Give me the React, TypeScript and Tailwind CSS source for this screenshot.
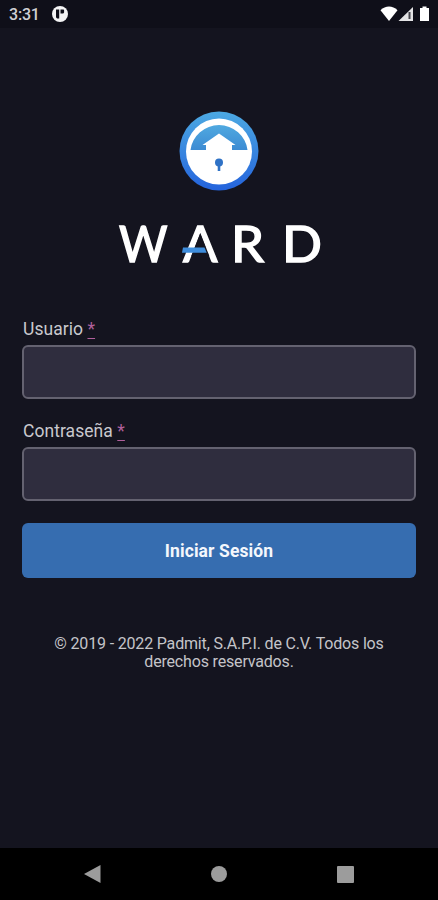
function StatusBar() {
  return (
    <header className="flex h-7 items-center justify-between bg-[#0f0f19] pl-[9px] pr-[7px]">
      <div className="flex items-center gap-3">
        <span className="pt-0.5 text-base leading-[26px] font-medium tracking-[-0.2px] text-[#cfcfd4]">3:31</span>
        <svg className="size-4" viewBox="0 0 16 16">
          <circle cx="8" cy="8" r="8" fill="#f4f4f5" />
          <path d="M4 3.500h3.200v9H6c-1.200 0-2-.6-2-2z" fill="#0f0f19" />
          <path d="M8.500 3.500h2.600c.6 0 1 .4 1 1V6c0 1-.8 1.600-1.800 1.600H8.500z" fill="#0f0f19" />
        </svg>
      </div>
      <svg className="h-4 w-[51px]" viewBox="0 0 51 16">
        <path d="M.5 4.200C5.500-.6 12.500-.6 17.500 4.200L9 15z" fill="#fff" />
        <path d="M33 1v14H18.500z" fill="#e4e4e6" />
        <path d="M28.500 6h2v7h-2z" fill="#45454c" />
        <path d="M42.500.5h4V2H49v13h-9V2h2.500z" fill="#fff" />
      </svg>
    </header>
  );
}

function Emblem() {
  return (
    <svg className="h-[80px] w-[80px]" viewBox="0 0 80 80">
      <defs>
        <linearGradient id="ring" x1="0" y1="0" x2="0" y2="1">
          <stop offset="0" stopColor="#4ca9e2" />
          <stop offset="1" stopColor="#2463dc" />
        </linearGradient>
        <linearGradient id="dome" x1="0" y1="0" x2="0" y2="1">
          <stop offset="0" stopColor="#50a9e0" />
          <stop offset="1" stopColor="#3c8bd3" />
        </linearGradient>
      </defs>
      <circle cx="40" cy="40" r="39.500" fill="url(#ring)" />
      <circle cx="40" cy="40.500" r="33" fill="#fff" />
      <path d="M11.500 39a28.700 28.200 0 0 1 57 0H53v-5h3.500L40 22.500 23.500 34H27v5z" fill="url(#dome)" />
      <circle cx="40" cy="51.500" r="4" fill="#2f72c6" />
      <path d="M38.700 53h2.600v7h-2.600z" fill="#2f72c6" />
    </svg>
  );
}

function Wordmark() {
  return (
    <svg
      className="h-[72px] w-[220px] font-['Lato',sans-serif] text-[50px] font-normal"
      viewBox="-8 -12 220 72"
      fill="#fff"
      stroke="#fff"
      strokeWidth="1.500"
    >
      <text x="2" y="42.500" textLength="48.500" lengthAdjust="spacingAndGlyphs">W</text>
      <text x="66" y="42.500" textLength="34.500" lengthAdjust="spacingAndGlyphs">A</text>
      <path d="M83.300 14l9 23H74.300z" fill="#14141f" stroke="none" />
      <path d="M66 28.500h21.500l2.200 5.200H65z" fill="#3e8ddc" stroke="none" />
      <text x="114" y="42.500" textLength="33" lengthAdjust="spacingAndGlyphs">R</text>
      <text x="165" y="42.500" textLength="40" lengthAdjust="spacingAndGlyphs">D</text>
    </svg>
  );
}

function Field({ label, type }: { label: string; type: string }) {
  return (
    <label className="block">
      <span className="block h-[28px] pl-px text-[17.500px] leading-[25px] tracking-[0.05px] text-[#c9c9ce]">
        {label} <span className="text-[#b0609c] underline underline-offset-[3px]">*</span>
      </span>
      <input
        type={type}
        className="block h-[54px] w-full rounded-md border-2 border-[#646270] bg-[#2f2d3e] px-4 text-white outline-none"
      />
    </label>
  );
}

export default function App() {
  return (
    <div className="flex h-[900px] w-[438px] flex-col bg-[#14141f] font-['Roboto',sans-serif]">
      <StatusBar />
      <main className="flex flex-1 flex-col px-[22px] pt-[83px]">
        <div className="flex flex-col items-center">
          <Emblem />
          <div className="mt-4">
            <Wordmark />
          </div>
        </div>
        <form className="mt-[38px] flex flex-col">
          <Field label="Usuario" type="text" />
          <div className="mt-5">
            <Field label="Contraseña" type="password" />
          </div>
          <button type="button" className="mt-[22px] h-[55px] rounded-md bg-[#366db0] pt-0.5 text-[17.500px] font-bold tracking-[0.1px] text-[#f4f7fc]">
            Iniciar Sesión
          </button>
        </form>
        <p className="mt-[57px] text-center text-base leading-[18px] tracking-[-0.17px] text-[#c4c4c9]">
          © 2019 - 2022 Padmit, S.A.P.I. de C.V. Todos los
          <br />
          derechos reservados.
        </p>
      </main>
      <nav className="flex h-[52px] items-center justify-between bg-black pl-[84px] pr-[84px]">
        <svg className="h-[18px] w-[17px]" viewBox="0 0 17 18">
          <path d="M0 9 16.500 0v18z" fill="#9c9c9c" />
        </svg>
        <div className="size-4 rounded-full bg-[#9c9c9c]" />
        <div className="size-[17px] rounded-[1px] bg-[#9c9c9c]" />
      </nav>
    </div>
  );
}
